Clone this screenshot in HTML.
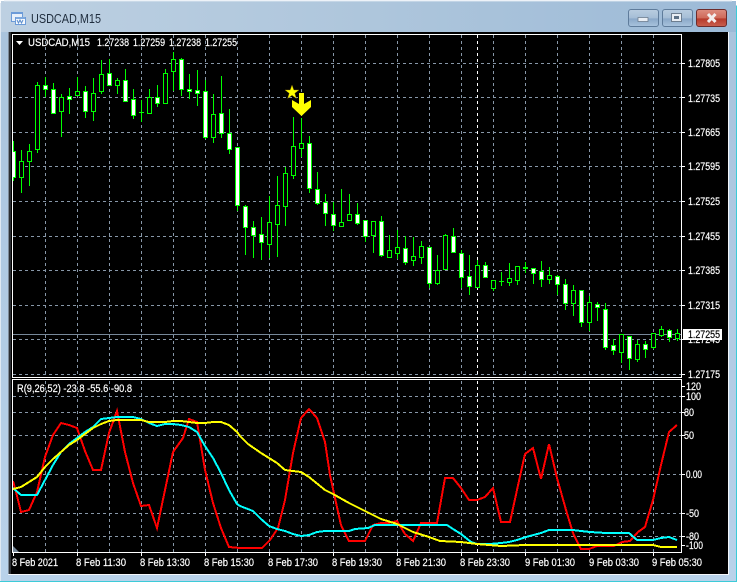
<!DOCTYPE html>
<html><head><meta charset="utf-8"><style>
html,body{margin:0;padding:0;background:#fff;width:739px;height:583px;overflow:hidden}
svg{display:block}
text{font-family:"Liberation Sans",sans-serif;font-size:11px;fill:#fff;stroke:#fff;stroke-width:.2}
</style></head><body>
<svg width="739" height="583" viewBox="0 0 739 583" xmlns="http://www.w3.org/2000/svg">
<defs>
<linearGradient id="ttl" x1="0" y1="0" x2="1" y2="0"><stop offset="0" stop-color="#bdd0e2"/><stop offset=".5" stop-color="#aec6dc"/><stop offset="1" stop-color="#9cbad7"/></linearGradient>
<linearGradient id="side" x1="0" y1="0" x2="0" y2="1"><stop offset="0" stop-color="#a9c3dc"/><stop offset="1" stop-color="#b9d2ea"/></linearGradient>
<linearGradient id="btn" x1="0" y1="0" x2="0" y2="1"><stop offset="0" stop-color="#b9cde0"/><stop offset=".5" stop-color="#a5bdd6"/><stop offset=".55" stop-color="#8aa8c8"/><stop offset="1" stop-color="#a9c4de"/></linearGradient>
<linearGradient id="cls" x1="0" y1="0" x2="0" y2="1"><stop offset="0" stop-color="#dd8d80"/><stop offset=".5" stop-color="#cf6a5a"/><stop offset=".55" stop-color="#b63a2b"/><stop offset="1" stop-color="#c9604f"/></linearGradient>
<clipPath id="plot2"><rect x="13" y="381" width="668" height="171"/></clipPath>
</defs>

<!-- window frame -->
<path d="M4 1H732L737 6V582H0V5Z" fill="#3ccbd8"/>
<path d="M4 1H732L736 6V581H0V5Z" fill="url(#side)"/>
<rect x="1" y="1" width="735" height="31" fill="url(#ttl)"/>
<path d="M4 1H732" stroke="#dbe6f0" fill="none"/>
<rect x="0" y="3" width="1" height="578" fill="#dfe9f3"/>

<!-- title icon -->
<g shape-rendering="crispEdges">
<rect x="11.500" y="12.500" width="11" height="9" fill="#e8f0fa" stroke="#6c9bd8"/>
<rect x="12" y="12" width="10" height="2" fill="#6c9bd8"/>
<rect x="15.500" y="17.500" width="10" height="7" fill="#f4f8fd" stroke="#6c9bd8"/>
<rect x="16" y="17" width="9" height="2" fill="#7ea9de"/>
</g>
<path d="M17 20l1.500 3 1.500-3 1.500 3 1.500-3" stroke="#5a8ccc" fill="none"/>
<text x="31" y="23" textLength="70" lengthAdjust="spacingAndGlyphs" style="font-size:13px;fill:#1f2d3d;stroke:none">USDCAD,M15</text>

<!-- buttons -->
<rect x="628.500" y="9.500" width="30" height="17" rx="2.500" fill="url(#btn)" stroke="#5f7c9b"/>
<rect x="638" y="17.500" width="10" height="4" fill="#e9eef4" stroke="#6d7e90" stroke-width=".8"/>
<rect x="662.500" y="9.500" width="30" height="17" rx="2.500" fill="url(#btn)" stroke="#5f7c9b"/>
<rect x="671.500" y="13.500" width="10" height="8" fill="#e9eef4" stroke="#6d7e90"/>
<rect x="674" y="16" width="5" height="3" fill="#5d7186"/>
<rect x="696.500" y="9.500" width="30" height="17" rx="2.500" fill="url(#cls)" stroke="#6d2c2c"/>
<path d="M708 14l7.500 8M715.500 14l-7.500 8" stroke="#f3eded" stroke-width="3" fill="none"/>

<!-- chart black client area -->
<rect x="9" y="32" width="719" height="542" fill="#000"/>
<rect x="8" y="32" width="1" height="542" fill="#7d8a98"/>
<rect x="9" y="32" width="2" height="542" fill="#2c2f33"/>
<rect x="8" y="574" width="721" height="1" fill="#f3f6fa"/>
<rect x="728" y="32" width="1" height="543" fill="#f3f6fa"/>

<g shape-rendering="crispEdges">
<!-- grid main -->
<path d="M13 63.500H681M13 97.500H681M13 132.500H681M13 166.500H681M13 201.500H681M13 236.500H681M13 270.500H681M13 305.500H681M13 339.500H681M13 374.500H681" stroke="#8797a8" stroke-dasharray="3 3" fill="none"/>
<path d="M45.500 35V377M77.500 35V377M109.500 35V377M141.500 35V377M173.500 35V377M205.500 35V377M237.500 35V377M269.500 35V377M301.500 35V377M333.500 35V377M365.500 35V377M397.500 35V377M429.500 35V377M461.500 35V377M493.500 35V377M525.500 35V377M557.500 35V377M589.500 35V377M621.500 35V377M653.500 35V377" stroke="#8797a8" stroke-dasharray="3 3" fill="none"/>
<path d="M477.500 35V377" stroke="#fff" stroke-dasharray="3 3" fill="none"/>
<!-- price line -->
<path d="M13 334.500H681" stroke="#778899" fill="none"/>

<!-- wicks -->
<path stroke="#00ff00" fill="none" d="M13.500 141V181M21.500 150V193M29.500 144V186M37.500 82V153M45.500 77V97M53.500 83V114M61.500 94V137M69.500 88V114M77.500 77V95M85.500 86V118M93.500 78V121M101.500 60V94M109.500 59V86M117.500 78V94M125.500 69V101M133.500 89V119M141.500 100V122M149.500 89V114M157.500 85V107M165.500 69V103M173.500 52V91M181.500 58V96M189.500 74V99M197.500 70V106M205.500 80V139M213.500 94V143M221.500 76V138M229.500 109V154M237.500 147V211M245.500 205V255M253.500 221V258M261.500 217V260M269.500 196V258M277.500 176V257M285.500 167V226M293.500 117V179M301.500 118V157M309.500 136V193M317.500 172V205M325.500 194V226M333.500 202V231M341.500 189V227M349.500 194V221M357.500 203V225M365.500 220V242M373.500 221V253M381.500 216V257M389.500 235V257M397.500 230V259M405.500 236V265M413.500 237V266M421.500 241V264M429.500 247V288M437.500 255V285M445.500 234V270M453.500 228V252M461.500 250V288M469.500 255V295M477.500 260V288M485.500 262V277M493.500 280V291M501.500 272V286M509.500 263V286M517.500 266V285M525.500 262V273M533.500 268V284M541.500 261V287M549.500 267V284M557.500 275V295M565.500 279V310M573.500 285V316M581.500 290V327M589.500 296V331M597.500 302V321M605.500 303V350M613.500 339V355M621.500 334V363M629.500 336V370M637.500 340V362M645.500 341V358M653.500 333V349M661.500 326V337M669.500 329V342M677.500 329V341"/>
<!-- hollow bodies -->
<path stroke="#00ff00" fill="#000" d="M19.500 161.500h4V177.500h-4zM27.500 151.500h4V161.500h-4zM35.500 85.500h4V149.500h-4zM59.500 97.500h4V111.500h-4zM75.500 91.500h4V95.500h-4zM91.500 93.500h4V111.500h-4zM99.500 74.500h4V91.500h-4zM115.500 80.500h4V85.500h-4zM147.500 97.500h4V113.500h-4zM163.500 73.500h4V103.500h-4zM171.500 59.500h4V71.500h-4zM211.500 114.500h4V137.500h-4zM267.500 222.500h4V244.500h-4zM275.500 205.500h4V224.500h-4zM283.500 173.500h4V206.500h-4zM291.500 146.500h4V175.500h-4zM299.500 143.500h4V148.500h-4zM339.500 222.500h4V226.500h-4zM347.500 214.500h4V220.500h-4zM371.500 221.500h4V235.500h-4zM387.500 250.500h4V257.500h-4zM395.500 247.500h4V253.500h-4zM411.500 256.500h4V260.500h-4zM419.500 246.500h4V257.500h-4zM435.500 270.500h4V283.500h-4zM443.500 235.500h4V269.500h-4zM475.500 265.500h4V287.500h-4zM491.500 280.500h4V288.500h-4zM507.500 278.500h4V282.500h-4zM515.500 266.500h4V280.500h-4zM547.500 275.500h4V279.500h-4zM571.500 290.500h4V303.500h-4zM587.500 302.500h4V322.500h-4zM619.500 334.500h4V352.500h-4zM635.500 344.500h4V359.500h-4zM651.500 333.500h4V347.500h-4zM659.500 329.500h4V335.500h-4zM675.500 333.500h4V338.500h-4z"/>
<!-- filled bodies -->
<path stroke="#00ff00" fill="#fff" d="M12.500 151.500h3V177.500h-3zM43.500 85.500h4V89.500h-4zM51.500 89.500h4V113.500h-4zM67.500 96.500h4V99.500h-4zM83.500 91.500h4V111.500h-4zM107.500 73.500h4V85.500h-4zM123.500 80.500h4V101.500h-4zM131.500 99.500h4V115.500h-4zM155.500 97.500h4V103.500h-4zM179.500 59.500h4V89.500h-4zM187.500 89.500h4V91.500h-4zM195.500 90.500h4V93.500h-4zM203.500 91.500h4V137.500h-4zM219.500 113.500h4V133.500h-4zM227.500 133.500h4V149.500h-4zM235.500 147.500h4V205.500h-4zM243.500 206.500h4V227.500h-4zM251.500 227.500h4V235.500h-4zM259.500 234.500h4V242.500h-4zM307.500 143.500h4V188.500h-4zM315.500 189.500h4V203.500h-4zM323.500 202.500h4V213.500h-4zM331.500 214.500h4V225.500h-4zM355.500 214.500h4V223.500h-4zM363.500 220.500h4V236.500h-4zM379.500 221.500h4V255.500h-4zM403.500 248.500h4V262.500h-4zM427.500 247.500h4V283.500h-4zM451.500 236.500h4V252.500h-4zM459.500 253.500h4V277.500h-4zM467.500 276.500h4V286.500h-4zM483.500 265.500h4V277.500h-4zM531.500 268.500h4V273.500h-4zM539.500 271.500h4V279.500h-4zM555.500 276.500h4V284.500h-4zM563.500 284.500h4V303.500h-4zM579.500 290.500h4V322.500h-4zM595.500 304.500h4V307.500h-4zM603.500 309.500h4V347.500h-4zM611.500 345.500h4V350.500h-4zM627.500 336.500h4V358.500h-4zM643.500 344.500h4V349.500h-4zM667.500 330.500h4V337.500h-4z"/>
<!-- dojis -->
<path stroke="#00ff00" fill="none" d="M139 112.500h5M499 281.500h5M523 268.500h5M523 267.500h5"/>

<!-- grid sub -->
<path d="M13 396.500H681M13 412.500H681M13 435.500H681M13 474.500H681M13 513.500H681M13 536.500H681" stroke="#8797a8" stroke-dasharray="3 3" fill="none"/>
<path d="M45.500 381V552M77.500 381V552M109.500 381V552M141.500 381V552M173.500 381V552M205.500 381V552M237.500 381V552M269.500 381V552M301.500 381V552M333.500 381V552M365.500 381V552M397.500 381V552M429.500 381V552M461.500 381V552M493.500 381V552M525.500 381V552M557.500 381V552M589.500 381V552M621.500 381V552M653.500 381V552" stroke="#8797a8" stroke-dasharray="3 3" fill="none"/>
<path d="M477.500 381V552" stroke="#fff" stroke-dasharray="3 3" fill="none"/>

<g clip-path="url(#plot2)" fill="none" stroke-width="2">
<polyline stroke="#ff0000" points="13,481 16,492 21,512 29,510 37,492 45,457 53,435 61,423 69,425 77,428 85,451 93,470 101,470 109,433 117,411 125,452 133,483 141,506 149,505 157,528 165,490 173,452 183,438 189,419 197,422 205,470 213,503 221,528 229,547 240,548 262,548 270,540 278,528 285,500 293,453 301,418 309,409 317,418 325,442 330,475 335,498 341,525 349,541 365,541 373,525 381,523 389,523 397,521 405,534 413,541 421,523 437,523 445,478 453,478 461,488 469,500 477,500 485,497 493,488 501,522 510,522 517,490 525,454 533,448 541,479 549,444 557,478 566,510 573,533 581,549 589,549 597,546 614,546 622,542 630,541 638,532 645,527 653,500 661,465 669,432 677,425"/>
<polyline stroke="#00ffff" points="13,488 21,495 37,495 45,480 53,465 61,452 69,444 77,438 85,432 93,427 101,419 109,418 117,417 133,417 141,419 149,423 157,426 165,424 173,424 181,425 189,427 197,432 205,446 213,458 221,473 229,490 237,504 240,506 253,511 261,519 269,526 277,529 285,531 293,534 301,536 309,535 317,532 325,531 349,531 355,529 368,528 375,525 447,525 453,529 461,534 471,542 477,544 490,544 501,543 509,542 517,540 526,537 541,533 549,530 573,530 581,531 590,532 606,533 629,533 637,540 653,540 661,538 669,537 677,540"/>
<polyline stroke="#ffff00" points="13,489 21,487 29,482 37,477 45,467 53,459 61,452 69,445 77,440 85,434 93,428 101,424 109,421 117,420 141,420 149,422 165,422 173,421 181,421 189,422 197,423 205,423 213,422 221,422 229,425 237,432 240,436 248,444 261,453 277,463 285,470 301,472 309,477 325,490 333,494 349,503 365,511 381,519 397,524 413,532 429,537 440,541 461,542 477,544 489,545 501,546 525,545 653,545 661,547 677,547"/>
</g>

<!-- frames -->
<path d="M12.500 34.500H681.500V377.500H12.500Z" stroke="#fff" fill="none"/>
<path d="M12.500 379.500H681.500V552.500H12.500Z" stroke="#fff" fill="none"/>
<!-- ticks right -->
<path stroke="#fff" fill="none" d="M682 63.500h3M682 97.500h3M682 132.500h3M682 166.500h3M682 201.500h3M682 236.500h3M682 270.500h3M682 305.500h3M682 339.500h3M682 374.500h3M682 386.500h3M682 396.500h3M682 412.500h3M682 435.500h3M682 474.500h3M682 513.500h3M682 536.500h3M682 545.500h3"/>
<!-- ticks bottom -->
<path stroke="#fff" fill="none" d="M13.500 553v3M77.500 553v3M141.500 553v3M205.500 553v3M269.500 553v3M333.500 553v3M397.500 553v3M461.500 553v3M525.500 553v3M589.500 553v3M653.500 553v3"/>
</g>

<!-- corner triangle -->
<path d="M13 546L19 552H13Z" fill="#778899"/>

<!-- object markers -->
<polygon fill="#ffff00" stroke="#8a6d00" stroke-width=".4" points="292,85 293.800,90 299,90 294.800,93.300 296.400,98.500 292,95.300 287.600,98.500 289.200,93.300 285,90 290.200,90"/>
<polygon fill="#ffff00" points="299,93 304,93 304,104 311,100 311,107 301.500,116 292,107 292,100 299,104"/>

<!-- header texts -->
<polygon fill="#fff" points="16,41 23,41 19.500,45"/>
<text x="28" y="46" textLength="62" lengthAdjust="spacingAndGlyphs">USDCAD,M15</text>
<text x="97" y="46" textLength="32" lengthAdjust="spacingAndGlyphs">1.27238</text>
<text x="133" y="46" textLength="32" lengthAdjust="spacingAndGlyphs">1.27259</text>
<text x="169" y="46" textLength="32" lengthAdjust="spacingAndGlyphs">1.27238</text>
<text x="205" y="46" textLength="32" lengthAdjust="spacingAndGlyphs">1.27255</text>
<text x="17" y="392" textLength="115" lengthAdjust="spacingAndGlyphs">R(9,26,52) -23.8 -55.6 -90.8</text>

<!-- price labels -->
<text x="688" y="67" textLength="32" lengthAdjust="spacingAndGlyphs">1.27805</text>
<text x="688" y="102" textLength="32" lengthAdjust="spacingAndGlyphs">1.27735</text>
<text x="688" y="136" textLength="32" lengthAdjust="spacingAndGlyphs">1.27665</text>
<text x="688" y="170" textLength="32" lengthAdjust="spacingAndGlyphs">1.27595</text>
<text x="688" y="205" textLength="32" lengthAdjust="spacingAndGlyphs">1.27525</text>
<text x="688" y="240" textLength="32" lengthAdjust="spacingAndGlyphs">1.27455</text>
<text x="688" y="274" textLength="32" lengthAdjust="spacingAndGlyphs">1.27385</text>
<text x="688" y="309" textLength="32" lengthAdjust="spacingAndGlyphs">1.27315</text>
<text x="688" y="343" textLength="32" lengthAdjust="spacingAndGlyphs">1.27245</text>
<text x="688" y="378" textLength="32" lengthAdjust="spacingAndGlyphs">1.27175</text>
<rect x="683" y="329" width="39" height="11" fill="#fff"/>
<text x="688" y="338" textLength="32" lengthAdjust="spacingAndGlyphs" style="fill:#000;stroke:#000">1.27255</text>

<!-- indicator labels -->
<text x="686" y="390" textLength="15" lengthAdjust="spacingAndGlyphs">120</text>
<text x="686" y="400" textLength="15" lengthAdjust="spacingAndGlyphs">100</text>
<text x="684" y="416" textLength="10" lengthAdjust="spacingAndGlyphs">80</text>
<text x="684" y="439" textLength="10" lengthAdjust="spacingAndGlyphs">50</text>
<text x="686" y="478" textLength="16" lengthAdjust="spacingAndGlyphs">0.00</text>
<text x="686" y="517" textLength="13" lengthAdjust="spacingAndGlyphs">-50</text>
<text x="686" y="540" textLength="13" lengthAdjust="spacingAndGlyphs">-80</text>
<text x="686" y="549" textLength="17" lengthAdjust="spacingAndGlyphs">-100</text>

<!-- time labels -->
<text x="12" y="566" textLength="46" lengthAdjust="spacingAndGlyphs">8 Feb 2021</text>
<text x="76" y="566" textLength="50" lengthAdjust="spacingAndGlyphs">8 Feb 11:30</text>
<text x="140" y="566" textLength="50" lengthAdjust="spacingAndGlyphs">8 Feb 13:30</text>
<text x="204" y="566" textLength="50" lengthAdjust="spacingAndGlyphs">8 Feb 15:30</text>
<text x="268" y="566" textLength="50" lengthAdjust="spacingAndGlyphs">8 Feb 17:30</text>
<text x="332" y="566" textLength="50" lengthAdjust="spacingAndGlyphs">8 Feb 19:30</text>
<text x="396" y="566" textLength="50" lengthAdjust="spacingAndGlyphs">8 Feb 21:30</text>
<text x="460" y="566" textLength="50" lengthAdjust="spacingAndGlyphs">8 Feb 23:30</text>
<text x="525" y="566" textLength="50" lengthAdjust="spacingAndGlyphs">9 Feb 01:30</text>
<text x="589" y="566" textLength="50" lengthAdjust="spacingAndGlyphs">9 Feb 03:30</text>
<text x="652" y="566" textLength="50" lengthAdjust="spacingAndGlyphs">9 Feb 05:30</text>
</svg>
</body></html>
